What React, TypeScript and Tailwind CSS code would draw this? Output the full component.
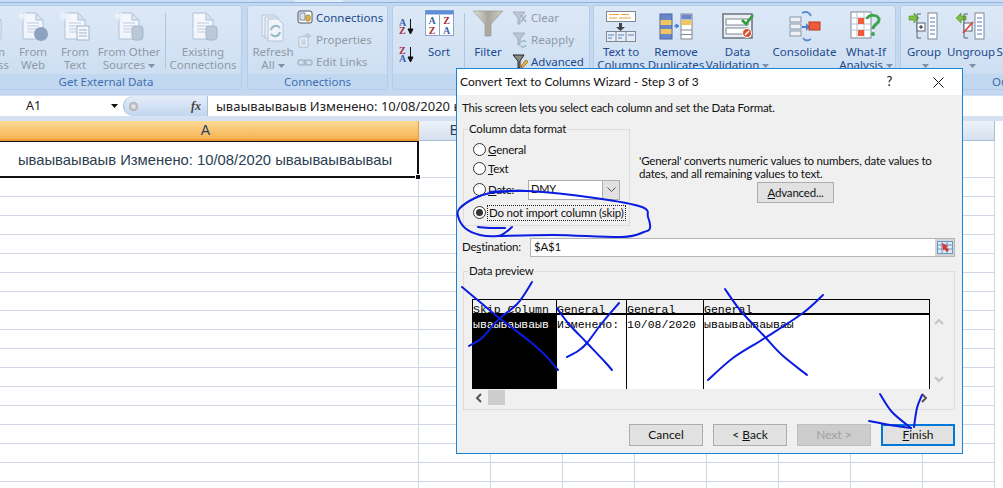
import React from "react";

const UI = { fontFamily: '"Noto Sans", "Open Sans", sans-serif' };
const DLG = { fontFamily: 'Lato, "Open Sans", sans-serif' };
const MONO = { fontFamily: '"Liberation Mono", monospace' };
const ARIAL = { fontFamily: '"Liberation Sans", Arial, sans-serif' };

function Caret({ c = "#7f8fa6" }: { c?: string }) {
  return (
    <svg width="7" height="4" viewBox="0 0 7 4" className="inline-block ml-[3px] align-middle">
      <path d="M0 0h7L3.5 4z" fill={c} />
    </svg>
  );
}

function Ic({ children, w = 36, h = 32, o = 1 }: { children: React.ReactNode; w?: number; h?: number; o?: number }) {
  return (
    <svg width={w} height={h} viewBox={`0 0 ${w} ${h}`} style={{ opacity: o }}>
      {children}
    </svg>
  );
}

function Big({
  w,
  l1,
  l2,
  dis,
  caret,
  icon,
}: {
  w: number;
  l1: string;
  l2?: string;
  dis?: boolean;
  caret?: boolean;
  icon: React.ReactNode;
}) {
  return (
    <div
      className={`flex flex-col items-center shrink-0 text-[11.5px] leading-[13px] whitespace-nowrap ${
        dis ? "text-[#8f9aa6]" : "text-[#1d4a8c]"
      }`}
      style={{ width: w }}
    >
      <div className="h-[39px] flex items-center justify-center pt-[1px]">{icon}</div>
      <div>{l1}</div>
      <div className="h-[13px]">
        {l2}
        {caret && <Caret />}
      </div>
    </div>
  );
}

function Small({ icon, text, dis }: { icon: React.ReactNode; text: string; dis?: boolean }) {
  return (
    <div
      className={`flex items-center h-[22px] text-[11.5px] whitespace-nowrap ${
        dis ? "text-[#8f9aa6]" : "text-[#1d4a8c]"
      }`}
    >
      <div className="w-[19px] flex items-center">{icon}</div>
      {text}
    </div>
  );
}

function Sep() {
  return <div className="w-px h-[56px] mt-[7px] bg-[#afc6e0] shrink-0" />;
}

function Group({ w, label, children }: { w: number; label: string; children: React.ReactNode }) {
  return (
    <div
      className="shrink-0 h-[85px] rounded-[3px] border border-[#b6cce6] bg-gradient-to-b from-[#dce8f6] to-[#cbddf2] flex flex-col overflow-hidden"
      style={{ width: w }}
    >
      <div className="flex-1 flex min-h-0">{children}</div>
      <div className="h-[15px] bg-[#c2d8f1] text-center text-[11.5px] leading-[15px] text-[#3f6fae] whitespace-nowrap">
        {label}
      </div>
    </div>
  );
}

function Doc({ extra, burst = true }: { extra?: React.ReactNode; burst?: boolean }) {
  return (
    <Ic w={32} h={32} o={0.7}>
      <path d="M6 3h13l7 7v19H6z" fill="#fff" stroke="#9fb2c9" />
      <path d="M19 3v7h7z" fill="#dbe5f1" stroke="#9fb2c9" />
      <path d="M10 13h12M10 16h12M10 19h10M10 22h8" stroke="#b4c2d3" />
      {burst && <path d="M5 1v10M0 6h10M1.5 2.5l7 7M8.5 2.5l-7 7" stroke="#f2f6fb" strokeWidth="1.4" />}
      {extra}
    </Ic>
  );
}

function SortSmall({ a, b }: { a: string; b: string }) {
  return (
    <div className="flex items-center h-[18px]">
      <div className="flex flex-col text-[10px] leading-[8px] font-bold" style={{ fontFamily: '"Liberation Serif", serif' }}>
        <span style={{ color: a === "A" ? "#3b5fb0" : "#a82b3c" }}>{a}</span>
        <span style={{ color: b === "A" ? "#3b5fb0" : "#a82b3c" }}>{b}</span>
      </div>
      <svg width="7" height="16" viewBox="0 0 7 16" className="ml-[1px]">
        <path d="M3.5 0v12M1 10l2.5 5L6 10z" stroke="#111" fill="#111" />
      </svg>
    </div>
  );
}

const FUNNEL_ID = "fg";

function SortFilter() {
  return (
    <Group w={198} label="Sort & Filter">
      <div className="ml-[6px] w-[20px] pt-[12px] flex flex-col gap-[10px]">
        <SortSmall a="A" b="Z" />
        <SortSmall a="Z" b="A" />
      </div>
      <Big
        w={40}
        l1="Sort"
        icon={
          <svg width="29" height="26" viewBox="0 0 29 26" className="-mt-[6px]">
            <rect x="0.5" y="0.5" width="28" height="25" fill="#fff" stroke="#8ea6c6" />
            <rect x="0.5" y="0.5" width="28" height="4" fill="#5e8ed6" />
            <path d="M14.5 5v20" stroke="#8ea6c6" />
            <text x="7" y="14" fontSize="10" fontWeight="700" fontFamily="Liberation Serif" textAnchor="middle" fill="#3b5fb0">A</text>
            <text x="7" y="24" fontSize="10" fontWeight="700" fontFamily="Liberation Serif" textAnchor="middle" fill="#a82b3c">Z</text>
            <text x="21.5" y="14" fontSize="10" fontWeight="700" fontFamily="Liberation Serif" textAnchor="middle" fill="#a82b3c">Z</text>
            <text x="21.5" y="24" fontSize="10" fontWeight="700" fontFamily="Liberation Serif" textAnchor="middle" fill="#3b5fb0">A</text>
          </svg>
        }
      />
      <div className="w-[5px] shrink-0" />
      <Sep />
      <Big
        w={46}
        l1="Filter"
        icon={
          <svg width="32" height="27" viewBox="0 0 32 27" className="-mt-[5px]">
            <defs>
              <linearGradient id={FUNNEL_ID} x1="0" x2="1" y1="0" y2="0">
                <stop offset="0" stopColor="#e4e2dc" />
                <stop offset="0.5" stopColor="#a8a69c" />
                <stop offset="1" stopColor="#d2d0c8" />
              </linearGradient>
            </defs>
            <path d="M1 1h30L19 14v12h-6V14z" fill={`url(#${FUNNEL_ID})`} stroke="#8f8e86" strokeWidth="0.6" />
          </svg>
        }
      />
      <div className="pt-[1px] ml-[1px]">
        <Small
          text="Clear"
          dis
          icon={
            <svg width="16" height="16" viewBox="0 0 16 16" opacity="0.6">
              <path d="M1 2h12L8 8v6H6V8z" fill="#a9b3bd" stroke="#7f8c99" />
              <path d="M9 5l5 7M14 5l-5 7" stroke="#7f8c99" strokeWidth="1.4" />
            </svg>
          }
        />
        <Small
          text="Reapply"
          dis
          icon={
            <svg width="16" height="16" viewBox="0 0 16 16" opacity="0.6">
              <path d="M1 1h12L8 7v6H6V7z" fill="#a9b3bd" stroke="#7f8c99" />
              <path d="M9 10a3 3 0 0 1 5 0M14 13a3 3 0 0 1-5 1" stroke="#6d9aa9" strokeWidth="1.5" fill="none" />
            </svg>
          }
        />
        <Small
          text="Advanced"
          icon={
            <svg width="16" height="16" viewBox="0 0 16 16">
              <path d="M1 1h11L8 7v7H6V7z" fill="#8d8c84" stroke="#222" />
              <path d="M9 12l5-6 2 1.5-5 6z" fill="#eab83f" stroke="#a9781b" />
              <path d="M9 12l-.5 2.5 2.5-1z" fill="#d9534f" />
            </svg>
          }
        />
      </div>
    </Group>
  );
}

function DataTools() {
  return (
    <Group w={303} label="Data Tools">
      <div className="w-[3px] shrink-0" />
      <Big
        w={48}
        l1="Text to"
        l2="Columns"
        icon={
          <Ic w={32} h={32}>
            <rect x="1.5" y="1.5" width="29" height="10" fill="#fff" stroke="#7f8794" />
            <path d="M4 4.5h10M16 4.5h8M4 8h8M14 8h12" stroke="#e8a33d" />
            <path d="M14 13h3v4h3l-4.500 4-4.500-4h3z" fill="#444" />
            <rect x="1.5" y="21.500" width="29" height="10" fill="#e6eef8" stroke="#7f8794" />
            <path d="M11 22v9M21 22v9" stroke="#7f8794" />
            <path d="M3 25h6M13 25h6M23 25h6M3 28h4M13 28h4" stroke="#4f81bd" />
          </Ic>
        }
      />
      <div className="w-[3px] shrink-0" />
      <Big
        w={56}
        l1="Remove"
        l2="Duplicates"
        icon={
          <Ic w={34} h={28}>
            <rect x="1" y="2" width="12" height="25" fill="#6a86c9" stroke="#4b64a6" />
            <rect x="1.500" y="8" width="11" height="5" fill="#f0c75e" />
            <rect x="1.500" y="17" width="11" height="5" fill="#f0c75e" />
            <rect x="22" y="2" width="11" height="25" fill="#fff" stroke="#7f8794" />
            <rect x="22.500" y="2.500" width="10" height="5" fill="#6a86c9" />
            <rect x="22.500" y="8" width="10" height="5" fill="#f0c75e" />
            <path d="M22 18h11M22 22.500h11" stroke="#7f8794" />
            <path d="M15 14h4M17 12l3 2-3 2z" stroke="#4a7fd0" fill="#4a7fd0" />
          </Ic>
        }
      />
      <div className="w-[2px] shrink-0" />
      <Big
        w={63}
        l1="Data"
        l2="Validation"
        caret
        icon={
          <Ic w={32} h={28}>
            <rect x="1" y="2" width="29" height="24" fill="#eceff3" stroke="#6b7280" strokeWidth="1.5" />
            <rect x="4" y="7" width="22" height="6" fill="#fff" stroke="#7f8794" />
            <rect x="4" y="16" width="22" height="6" fill="#fff" stroke="#7f8794" />
            <path d="M20 8l4 4 7-9" stroke="#2e9e3e" strokeWidth="2.600" fill="none" />
            <circle cx="25" cy="21" r="4.500" fill="#d9502e" stroke="#fff" />
            <path d="M23 23l4-4" stroke="#fff" strokeWidth="1.400" />
          </Ic>
        }
      />
      <div className="w-[2px] shrink-0" />
      <Big
        w={67}
        l1="Consolidate"
        icon={
          <Ic w={32} h={32}>
            <rect x="1" y="7" width="11" height="5" fill="#eef2f7" stroke="#8a95a5" />
            <rect x="1" y="14" width="11" height="5" fill="#eef2f7" stroke="#8a95a5" />
            <rect x="1" y="21" width="11" height="5" fill="#eef2f7" stroke="#8a95a5" />
            <path d="M13 16h4v-3l4 4-4 4v-3h-4z" fill="#4a7fd0" />
            <rect x="20" y="12" width="11" height="8" fill="#ef5b3a" stroke="#b23d22" />
            <path d="M13 3c4-2 7-1 9 3M22 29c-3 2-6 2-8-1" stroke="#5a8bd6" strokeWidth="1.800" fill="none" />
          </Ic>
        }
      />
      <div className="w-[2px] shrink-0" />
      <Big
        w={52}
        l1="What-If"
        l2="Analysis"
        caret
        icon={
          <Ic w={32} h={32}>
            <rect x="1" y="2" width="20" height="26" fill="#fff" stroke="#7f8794" />
            <path d="M1 8h20M1 14h20M1 20h20M7 2v26M14 2v26" stroke="#b9c2cc" />
            <rect x="8" y="8" width="6" height="6" fill="#ef5b3a" />
            <rect x="8" y="20" width="6" height="6" fill="#ef5b3a" />
            <path d="M17 9c1-5 12-5 12 1 0 4-6 4-6 9" stroke="#3fa34d" strokeWidth="3" fill="none" />
            <circle cx="23" cy="24" r="2" fill="#3fa34d" />
          </Ic>
        }
      />
    </Group>
  );
}

function GroupIcon({ dir }: { dir: "in" | "out" }) {
  return (
    <Ic w={32} h={30}>
      <path d={dir === "in" ? "M1 5h5V2l5 5-5 5V9H1z" : "M11 5H6V2L1 7l5 5V9h5z"} fill="#7fc241" stroke="#4f8a22" strokeWidth="0.6" />
      <path d="M13 3h-4v24h4" stroke="#5a6474" fill="none" />
      <rect x="20" y="2" width="9" height="26" fill="#fff" stroke="#7f8794" />
      <path d="M22 7h5M22 11h5M22 15h5M22 19h5M22 23h5" stroke="#4a7fd0" />
      <rect x="9" y="12" width="8" height="8" fill="#fff" stroke="#5a6474" />
      {dir === "in" ? (
        <path d="M11 16h4M13 14v4" stroke="#222" />
      ) : (
        <path d="M8 22l10-11" stroke="#e03b2e" strokeWidth="1.600" />
      )}
    </Ic>
  );
}

function Outline() {
  return (
    <Group w={224} label="Outline">
      <Big w={46} l1="Group" l2="" caret icon={<GroupIcon dir="in" />} />
      <Big w={48} l1="Ungroup" l2="" caret icon={<GroupIcon dir="out" />} />
      <Big w={48} l1="Subtotal" icon={<div className="w-[32px]" />} />
    </Group>
  );
}

function RibbonFull() {
  return (
    <div className="h-[95px] bg-[#c4d9f1] shrink-0 overflow-hidden">
      <div className="h-[3px] bg-[#c9def5] border-b border-[#8db3e4] flex">
        <div className="ml-[295px] w-[48px] h-[2px] bg-[#e3eefa]" />
      </div>
      <div className="flex pt-[2px] -ml-[30px] w-[1300px]">
        <Group w={272} label="Get External Data">
          <div className="-ml-[1px]" />
          <Big w={42} l1="From" l2="Access" dis icon={<Doc />} />
          <Big w={42} l1="From" l2="Web" dis icon={<Doc extra={<circle cx="24" cy="24" r="7" fill="#6f86ab" />} />} />
          <Big w={42} l1="From" l2="Text" dis icon={<Doc extra={<g><rect x="18" y="16" width="12" height="14" fill="#fff" stroke="#8fa3bb" /><path d="M20 20h8M20 23h8M20 26h8" stroke="#8fa3bb" /></g>} />} />
          <Big w={66} l1="From Other" l2="Sources" caret dis icon={<Doc extra={<rect x="19" y="16" width="11" height="14" rx="3" fill="#b0bdcc" stroke="#8fa3bb" />} />} />
          <div className="w-[3px] shrink-0" />
          <Sep />
          <div className="w-[2px] shrink-0" />
          <Big w={70} l1="Existing" l2="Connections" dis icon={<Doc burst={false} extra={<rect x="19" y="16" width="11" height="14" rx="3" fill="#b0bdcc" stroke="#8fa3bb" />} />} />
        </Group>
        <div className="w-[5px] shrink-0" />
        <Group w={141} label="Connections">
          <div className="ml-[1px]">
            <Big
              w={48}
              l1="Refresh"
              l2="All"
              caret
              dis
              icon={
                <Ic w={32} h={32} o={0.6}>
                  <path d="M5 5h13v21H5z" fill="#f4f7fb" stroke="#9fb2c9" />
                  <path d="M8 7h13v21H8z" fill="#f4f7fb" stroke="#9fb2c9" />
                  <path d="M11 9h10l5 5v17H11z" fill="#fff" stroke="#9fb2c9" />
                  <path d="M14 20a5 5 0 0 1 9-2M23 22a5 5 0 0 1-9 2" stroke="#6d9aa9" strokeWidth="2" fill="none" />
                </Ic>
              }
            />
          </div>
          <div className="pt-[1px]">
            <Small
              text="Connections"
              icon={
                <svg width="16" height="16" viewBox="0 0 16 16">
                  <rect x="1" y="1" width="14" height="12" rx="2" fill="#fff" stroke="#46505e" />
                  <rect x="3" y="3" width="5" height="7" fill="#dbe5f1" stroke="#7d8ea5" />
                  <rect x="9" y="5" width="4" height="6" rx="1.5" fill="#e2b74a" stroke="#a27f22" />
                </svg>
              }
            />
            <Small
              text="Properties"
              dis
              icon={
                <svg width="16" height="16" viewBox="0 0 16 16" opacity="0.55">
                  <path d="M2 5h9v10H2z" fill="#fff" stroke="#8f9fb3" />
                  <path d="M4 8h5M4 10h5M4 12h5" stroke="#8f9fb3" />
                  <path d="M6 4l5-3 4 3-3 2z" fill="#aab8ca" />
                </svg>
              }
            />
            <Small
              text="Edit Links"
              dis
              icon={
                <svg width="16" height="16" viewBox="0 0 16 16" opacity="0.6">
                  <rect x="1" y="6" width="8" height="5" rx="2.5" fill="none" stroke="#8f9fb3" strokeWidth="1.5" />
                  <rect x="7" y="6" width="8" height="5" rx="2.5" fill="none" stroke="#8f9fb3" strokeWidth="1.5" />
                </svg>
              }
            />
          </div>
        </Group>
        <div className="w-[4px] shrink-0" />
        <SortFilter />
        <div className="w-[3px] shrink-0" />
        <DataTools />
        <div className="w-[4px] shrink-0" />
        <Outline />
      </div>
    </div>
  );
}

function FormulaBar() {
  return (
    <div className="h-[26px] bg-[#d3e1f3] shrink-0 pt-[1px]">
      <div className="h-[20px] flex bg-white items-stretch">
        <div className="w-[123px] flex items-center justify-between pl-[26px] pr-[5px] text-[12.5px] text-[#222]" style={UI}>
          A1
          <svg width="7" height="4" viewBox="0 0 7 4">
            <path d="M0 0h7L3.500 4z" fill="#111" />
          </svg>
        </div>
        <div className="w-[84px] bg-gradient-to-b from-[#e3edf9] to-[#c3d6ee] rounded-l-[10px] border-l border-[#9db6d6] flex items-center justify-between pl-[5px] pr-[6px]">
          <div className="w-[9px] h-[9px] rounded-full bg-[radial-gradient(circle,#f4f4f4,#8a8a8a)]" />
          <span className="text-[12px] italic font-bold text-[#444]" style={{ fontFamily: '"Liberation Serif", serif' }}>
            fx
          </span>
        </div>
        <div className="flex-1 border-l border-[#a9bfd9] pl-[8px] text-[13px] leading-[21px] text-[#222] whitespace-nowrap overflow-hidden" style={UI}>
          ываываываыв Изменено: 10/08/2020 ываываываываы
        </div>
      </div>
    </div>
  );
}

function ColHeader() {
  return (
    <div className="flex h-[20px] shrink-0 w-[1100px]" style={ARIAL}>
      <div className="w-[419px] pr-[7px] bg-gradient-to-b from-[#fbd994] to-[#f6b453] border-b-2 border-r border-[#ef9a35] text-center text-[14px] leading-[18px] text-[#27405f]">
        A
      </div>
      {["B", "C", "D", "E", "F", "G", "H", "I"].map((c) => (
        <div
          key={c}
          className="w-[72px] bg-gradient-to-b from-[#eef3fa] to-[#d5dfee] border-r border-b border-[#a9bdd6] text-center text-[14px] leading-[18px] text-[#27405f]"
        >
          {c}
        </div>
      ))}
    </div>
  );
}

function Sheet() {
  const cols = Array.from({ length: 8 });
  const rows = Array.from({ length: 17 });
  return (
    <div className="flex-1 bg-white overflow-hidden">
      <div className="flex h-[37px] w-[1100px]">
        <div
          className="w-[419px] pr-[7px] pt-[2px] border-t border-b-2 border-r-2 border-[#111] relative flex items-center justify-center text-[14.8px] text-[#2c3e50] whitespace-nowrap"
          style={ARIAL}
        >
          ываываываыв Изменено: 10/08/2020 ываываываываы
          <div className="absolute -right-[4px] -bottom-[4px] w-[6px] h-[6px] bg-[#111] border border-white" />
        </div>
        {cols.map((_, i) => (
          <div key={i} className="w-[72px] border-r border-b border-[#d0d7e5]" />
        ))}
      </div>
      {rows.map((_, r) => (
        <div key={r} className="flex h-[19px] w-[1100px]">
          <div className="w-[419px] border-r border-b border-[#d0d7e5]" />
          {cols.map((_, i) => (
            <div key={i} className="w-[72px] border-r border-b border-[#d0d7e5]" />
          ))}
        </div>
      ))}
    </div>
  );
}

function GroupBox({ title, className, children }: { title: string; className: string; children: React.ReactNode }) {
  return (
    <div className={`relative border border-[#dcdcdc] ${className}`}>
      <span className="absolute -top-[9px] left-[4px] bg-[#f0f0f0] px-px leading-[16px] whitespace-nowrap">
        {title}
      </span>
      {children}
    </div>
  );
}

function Radio({ on, children, className = "" }: { on?: boolean; children: React.ReactNode; className?: string }) {
  return (
    <div className={`flex items-center gap-[2px] whitespace-nowrap ${className}`}>
      <div className="w-[13px] h-[13px] rounded-full border border-[#333] bg-white flex items-center justify-center shrink-0">
        {on && <div className="w-[7px] h-[7px] rounded-full bg-[#333]" />}
      </div>
      {children}
    </div>
  );
}

function Btn({ children, kind }: { children: React.ReactNode; kind?: "dis" | "def" }) {
  const c =
    kind === "dis"
      ? "bg-[#cccccc] border border-[#bfbfbf] text-[#a0a0a0]"
      : kind === "def"
      ? "bg-[#e1e1e1] border-2 border-[#0078d7] text-[#111]"
      : "bg-[#e1e1e1] border border-[#adadad] text-[#111]";
  return <div className={`w-[74px] h-[22px] flex items-center justify-center text-[12px] tracking-normal ${c}`}>{children}</div>;
}

function PreviewCol({ w, head, text, black }: { w: number; head: string; text: string; black?: boolean }) {
  return (
    <div className="flex flex-col border-r border-black shrink-0 overflow-hidden tracking-normal" style={{ width: w }}>
      <div className="h-[15px] border-b-2 border-black text-[11.5px] leading-[19px] whitespace-nowrap">{head}</div>
      <div className={`flex-1 text-[11.5px] leading-[19px] whitespace-nowrap ${black ? "bg-black text-white" : "bg-white text-black"}`}>
        {text}
      </div>
    </div>
  );
}

function Chevron({ d }: { d: "up" | "down" | "left" | "right" }) {
  const p = {
    up: "M1 6l4-4 4 4",
    down: "M1 2l4 4 4-4",
    left: "M6 1L2 5l4 4",
    right: "M2 1l4 4-4 4",
  }[d];
  const dark = d === "left" || d === "right";
  return (
    <svg width="10" height="10" viewBox="0 0 10 10">
      <path d={p} fill="none" stroke={dark ? "#555" : "#c4c4c4"} strokeWidth="2" />
    </svg>
  );
}

function Dialog() {
  return (
    <div
      className="absolute left-[456px] top-[68px] w-[507px] h-[386px] border border-[#1883d7] bg-[#f0f0f0] flex flex-col text-[11.5px] tracking-[-0.2px] text-[#111]"
      style={DLG}
    >
      <div className="h-[26px] bg-white flex items-center pl-[3px] shrink-0">
        <span className="flex-1 text-[12px] tracking-normal">Convert Text to Columns Wizard - Step 3 of 3</span>
        <span className="text-[13px] mr-[41px]">?</span>
        <svg width="11" height="11" viewBox="0 0 11 11" className="mr-[18px]">
          <path d="M0.500 0.500l10 10M10.500 0.500l-10 10" stroke="#111" />
        </svg>
      </div>
      <div className="flex-1 flex flex-col pl-[6px] pr-[7px]">
        <div className="h-[27px] leading-[26px] -ml-[1px]">This screen lets you select each column and set the Data Format.</div>
        <div className="flex h-[97px] mt-[7px]">
          <GroupBox title="Column data format" className="w-[167px] shrink-0">
            <div className="pl-[9px] pt-[10px] flex flex-col">
              <Radio className="h-[19px]">
                <span><u>G</u>eneral</span>
              </Radio>
              <Radio className="h-[19px]">
                <span><u>T</u>ext</span>
              </Radio>
              <Radio className="h-[23px]">
                <span className="w-[38px]"><u>D</u>ate:</span>
                <div className="w-[92px] h-[20px] bg-white border border-[#adadad] flex items-center justify-between pl-[2px] text-[11px]">
                  DMY
                  <div className="w-[17px] h-[18px] bg-[#e1e1e1] border-l border-[#adadad] flex items-center justify-center">
                    <svg width="9" height="5" viewBox="0 0 9 5">
                      <path d="M0.500 0.500l4 4 4-4" fill="none" stroke="#555" />
                    </svg>
                  </div>
                </div>
              </Radio>
              <Radio on className="h-[23px]">
                <span className="outline-1 outline-dotted outline-[#222] leading-[14px] px-px">Do not import column (skip)</span>
              </Radio>
            </div>
          </GroupBox>
          <div className="flex-1 pl-[9px] pt-[25px] flex flex-col">
            <div className="leading-[13px] whitespace-nowrap">
              'General' converts numeric values to numbers, date values to
              <br />
              dates, and all remaining values to text.
            </div>
            <div className="flex justify-end pr-[121px] mt-[2px]">
              <div className="w-[77px] h-[21px] bg-[#e1e1e1] border border-[#adadad] flex items-center justify-center">
                <span><u>A</u>dvanced...</span>
              </div>
            </div>
          </div>
        </div>
        <div className="flex items-center h-[18px] mt-[12px] -ml-[1px]">
          <span className="w-[68px] shrink-0">De<u>s</u>tination:</span>
          <div className="flex-1 h-[19px] bg-white border border-[#b4b4b4] flex items-center pl-[3px] justify-between">
            $A$1
            <div className="w-[19px] h-[17px] bg-[#d4d4d4] flex items-center justify-center">
              <svg width="16" height="13" viewBox="0 0 16 13">
                <rect x="0.500" y="0.500" width="15" height="12" fill="#dce9f7" stroke="#6d97c7" />
                <path d="M0 4h16M0 8h16M5 0v13M10 0v13" stroke="#6d97c7" />
                <path d="M5 2l6 3-2 1 3 3-2 2-3-3-1 2z" fill="#d8372c" />
              </svg>
            </div>
          </div>
        </div>
        <GroupBox title="Data preview" className="mt-[15px] h-[139px] pl-[8px] pt-[27px]">
          <div className="flex items-start">
            <div className="flex h-[90px] w-[458px] border-t border-l border-black text-black" style={MONO}>
              <PreviewCol w={84} head="Skip Column" text="ываываываыв" black />
              <PreviewCol w={70} head="General" text="Изменено:" />
              <PreviewCol w={77} head="General" text="10/08/2020" />
              <PreviewCol w={226} head="General" text="ываываываываы" />
            </div>
            <div className="w-[18px] h-[90px] flex flex-col items-center justify-between pt-[19px] pb-[4px]">
              <Chevron d="up" />
              <Chevron d="down" />
            </div>
          </div>
          <div className="flex items-center h-[17px] w-[458px] pl-[3px]">
            <Chevron d="left" />
            <div className="w-[17px] h-[15px] bg-[#cdcdcd] ml-[3px]" />
            <div className="flex-1" />
            <Chevron d="right" />
          </div>
        </GroupBox>
        <div className="flex justify-end gap-[10px] mt-[14px]">
          <Btn>Cancel</Btn>
          <Btn>
            <span>&lt; <u>B</u>ack</span>
          </Btn>
          <Btn kind="dis">
            <span>Next &gt;</span>
          </Btn>
          <Btn kind="def">
            <span><u>F</u>inish</span>
          </Btn>
        </div>
      </div>
    </div>
  );
}

function smooth(pts: number[][]) {
  let d = `M${pts[0][0]} ${pts[0][1]}`;
  for (let i = 0; i < pts.length - 1; i++) {
    const p0 = pts[i - 1] || pts[i];
    const p1 = pts[i];
    const p2 = pts[i + 1];
    const p3 = pts[i + 2] || p2;
    const c1 = [p1[0] + (p2[0] - p0[0]) / 6, p1[1] + (p2[1] - p0[1]) / 6];
    const c2 = [p2[0] - (p3[0] - p1[0]) / 6, p2[1] - (p3[1] - p1[1]) / 6];
    d += ` C${c1[0]} ${c1[1]} ${c2[0]} ${c2[1]} ${p2[0]} ${p2[1]}`;
  }
  return d;
}

const STROKES: number[][][] = [
  [[528, 191], [513, 191], [490, 193], [475, 198], [460, 208], [458, 216], [465, 228], [480, 235], [498, 236], [506, 232], [512, 227]],
  [[478, 227], [490, 228], [505, 228]],
  [[498, 236], [555, 235], [622, 237], [644, 232], [650, 228], [648, 217], [642, 207], [595, 198], [528, 191], [490, 192]],
  [[462, 287], [480, 302], [498, 317], [528, 340], [545, 355], [558, 370]],
  [[532, 282], [518, 303], [498, 320], [482, 338], [469, 346]],
  [[557, 308], [568, 323], [587, 343], [605, 362], [612, 370]],
  [[619, 303], [602, 323], [587, 343], [578, 351], [567, 357]],
  [[725, 289], [740, 310], [765, 337], [782, 355], [807, 375]],
  [[823, 295], [803, 313], [765, 338], [733, 358], [708, 380]],
  [[880, 394], [892, 412], [911, 428]],
  [[869, 421], [890, 425], [911, 428]],
  [[922, 395], [917, 408], [914, 427]],
];

function Annotations() {
  return (
    <svg className="absolute inset-0 pointer-events-none" width="1003" height="488" viewBox="0 0 1003 488">
      {STROKES.map((s, i) => (
        <path key={i} d={smooth(s)} fill="none" stroke="#0a1ce0" strokeWidth="2" strokeLinecap="round" strokeLinejoin="round" />
      ))}
    </svg>
  );
}

export default function App() {
  return (
    <div className="relative w-[1003px] h-[488px] overflow-hidden flex flex-col bg-white" style={UI}>
      <RibbonFull />
      <FormulaBar />
      <ColHeader />
      <Sheet />
      <Dialog />
      <Annotations />
    </div>
  );
}
